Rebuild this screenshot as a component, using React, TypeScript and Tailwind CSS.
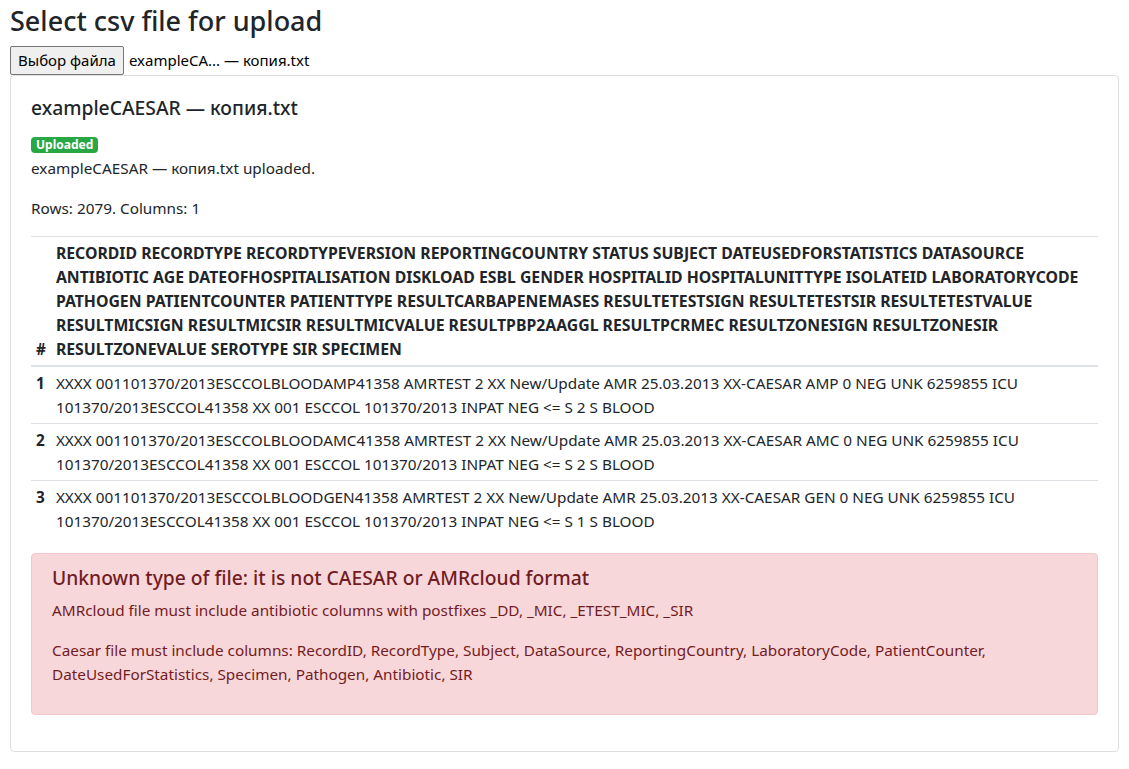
import React from "react";

const headerCols =
  "RECORDID RECORDTYPE RECORDTYPEVERSION REPORTINGCOUNTRY STATUS SUBJECT DATEUSEDFORSTATISTICS DATASOURCE ANTIBIOTIC AGE DATEOFHOSPITALISATION DISKLOAD ESBL GENDER HOSPITALID HOSPITALUNITTYPE ISOLATEID LABORATORYCODE PATHOGEN PATIENTCOUNTER PATIENTTYPE RESULTCARBAPENEMASES RESULTETESTSIGN RESULTETESTSIR RESULTETESTVALUE RESULTMICSIGN RESULTMICSIR RESULTMICVALUE RESULTPBP2AAGGL RESULTPCRMEC RESULTZONESIGN RESULTZONESIR RESULTZONEVALUE SEROTYPE SIR SPECIMEN";

const rows = [
  "XXXX 001101370/2013ESCCOLBLOODAMP41358 AMRTEST 2 XX New/Update AMR 25.03.2013 XX-CAESAR AMP 0 NEG UNK 6259855 ICU 101370/2013ESCCOL41358 XX 001 ESCCOL 101370/2013 INPAT NEG <= S 2 S BLOOD",
  "XXXX 001101370/2013ESCCOLBLOODAMC41358 AMRTEST 2 XX New/Update AMR 25.03.2013 XX-CAESAR AMC 0 NEG UNK 6259855 ICU 101370/2013ESCCOL41358 XX 001 ESCCOL 101370/2013 INPAT NEG <= S 2 S BLOOD",
  "XXXX 001101370/2013ESCCOLBLOODGEN41358 AMRTEST 2 XX New/Update AMR 25.03.2013 XX-CAESAR GEN 0 NEG UNK 6259855 ICU 101370/2013ESCCOL41358 XX 001 ESCCOL 101370/2013 INPAT NEG <= S 1 S BLOOD",
];

export default function App() {
  return (
    <div
      className="min-h-screen bg-white px-[10px] pt-[4px] text-[#212529] text-[15.3px] leading-[24px]"
      style={{ fontFamily: '"Noto Sans", "Open Sans", sans-serif' }}
    >
      <h3 className="text-[27px] leading-[34px] font-medium mb-[7px]">Select csv file for upload</h3>

      {/* file input */}
      <div className="flex items-center h-[30px]">
        <button className="h-[29px] px-[7px] bg-[#efefef] border border-[#767676] rounded-[2px] text-[15px] text-black">
          Выбор файла
        </button>
        <span className="ml-[5px] text-[15px] text-black">exampleCA... — копия.txt</span>
      </div>

      {/* card */}
      <div className="border border-[rgba(0,0,0,0.125)] rounded-[4px] p-5">
        <h5 className="text-[19.3px] leading-[24px] font-medium mb-3">exampleCAESAR — копия.txt</h5>
        <div className="h-[24px] flex items-center pt-[2px]">
          <span className="flex items-center h-[16px] bg-[#28a745] text-white text-[12px] font-bold leading-[12px] px-[5px] rounded-[4px]">
            Uploaded
          </span>
        </div>
        <p className="mb-4">exampleCAESAR — копия.txt uploaded.</p>
        <p className="mb-4">Rows: 2079. Columns: 1</p>

        <table className="w-full border-collapse mb-4">
          <thead>
            <tr>
              <th className="border-t border-b-2 border-[#dee2e6] px-[5px] py-1 align-bottom text-left font-bold text-[15.3px]">#</th>
              <th className="border-t border-b-2 border-[#dee2e6] px-[5px] py-1 align-bottom text-left font-bold text-[15.8px]">
                {headerCols}
              </th>
            </tr>
          </thead>
          <tbody>
            {rows.map((r, i) => (
              <tr key={i}>
                <th className="border-t border-[#dee2e6] px-[5px] py-1 align-top text-left font-bold">{i + 1}</th>
                <td className="border-t border-[#dee2e6] px-[5px] py-1 align-top">{r}</td>
              </tr>
            ))}
          </tbody>
        </table>

        <div className="bg-[#f8d7da] border border-[#f5c6cb] text-[#721c24] rounded-[4px] px-5 py-3 mb-4">
          <h4 className="text-[19.3px] leading-[24px] font-medium mb-2">
            Unknown type of file: it is not CAESAR or AMRcloud format
          </h4>
          <p className="mb-4">AMRcloud file must include antibiotic columns with postfixes _DD, _MIC, _ETEST_MIC, _SIR</p>
          <p className="mb-4">
            Caesar file must include columns: RecordID, RecordType, Subject, DataSource, ReportingCountry, LaboratoryCode,
            PatientCounter, DateUsedForStatistics, Specimen, Pathogen, Antibiotic, SIR
          </p>
        </div>
      </div>
    </div>
  );
}
